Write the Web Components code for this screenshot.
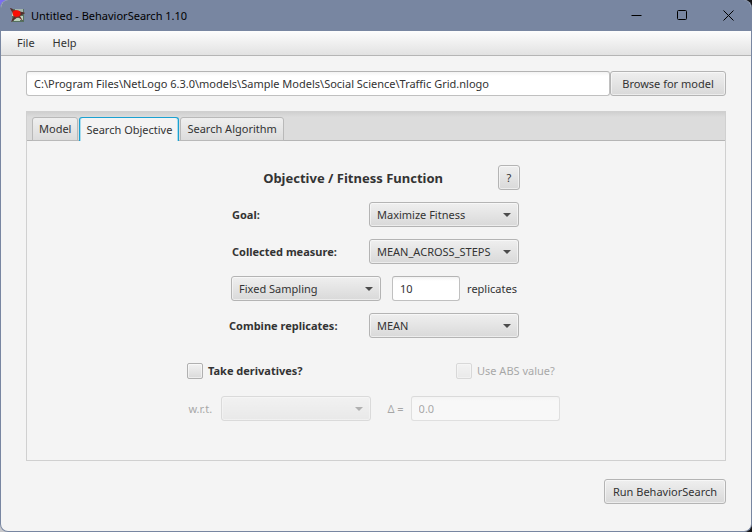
<!DOCTYPE html>
<html lang="en">
<head>
<meta charset="utf-8">
<title>Untitled - BehaviorSearch 1.10</title>
<style>
  html, body { margin: 0; min-height: 100vh; }
  body {
    display: flex;
    font: 11px/16px "Noto Sans", "Open Sans", sans-serif;
    color: #333;
    background:
      radial-gradient(circle at 0 0, #7a6ff0 12px, transparent 13px),
      radial-gradient(circle at 0 100%, #c9c9cc 12px, transparent 13px),
      #16161a;
  }
</style>
</head>
<body>
<app-window>
  <title-bar slot="title">Untitled - BehaviorSearch 1.10</title-bar>
  <menu-bar slot="menu" items="File|Help"></menu-bar>
  <path-row>
    <fx-field wide name="Model file" value="C:\Program Files\NetLogo 6.3.0\models\Sample Models\Social Science\Traffic Grid.nlogo"></fx-field>
    <fx-button style="--w:116px">Browse for model</fx-button>
  </path-row>
  <tab-pane tabs="Model|Search Objective|Search Algorithm" selected="1">
    <objective-form></objective-form>
  </tab-pane>
  <fx-button slot="footer" style="--w:122px">Run BehaviorSearch</fx-button>
</app-window>

<script>
const BASE = `
  *, *::before, *::after { box-sizing: border-box; }
  button, input, select { font: inherit; color: inherit; margin: 0; }
`;

class Base extends HTMLElement {
  connectedCallback() {
    if (this.shadowRoot) return;
    this.attachShadow({ mode: "open" }).innerHTML = `<style>${BASE}${this.css()}</style>${this.html()}`;
  }
  attr(n, d = "") { return this.getAttribute(n) ?? d; }
  list(n) { return this.attr(n).split("|"); }
}

customElements.define("app-window", class extends Base {
  css() { return `
    :host { flex: 1; min-width: 0; display: flex; flex-direction: column; min-height: 100vh; box-sizing: border-box;
      border: 1px solid #7886a1; border-top: 0; border-radius: 8px; overflow: hidden; background: #f4f4f4; }
    main { flex: 1; display: flex; flex-direction: column; padding: 15px 25px 18px; gap: 15px; }
    footer { display: flex; justify-content: flex-end; padding: 0 25px 27px; }
  `; }
  html() { return `<slot name="title"></slot><slot name="menu"></slot><main><slot></slot></main><footer><slot name="footer"></slot></footer>`; }
});

customElements.define("title-bar", class extends Base {
  css() { return `
    :host { display: flex; align-items: center; height: 31px; background: #7886a1; color: #000; padding-left: 9px; }
    .t { flex: 1; padding-left: 6px; }
    .logo { width: 15px; height: 15px; }
    button { width: 46px; height: 31px; border: 0; padding: 0; background: none; display: grid; place-items: center; }
    button svg { width: 11px; height: 11px; fill: none; stroke: #000; }
  `; }
  html() { return `
    <svg class="logo" viewBox="0 0 15 15" aria-hidden="true">
      <rect x="2" y="1" width="12" height="13" fill="#55705f"/>
      <rect x="5" y="1" width="8" height="3" fill="#a3b5ad"/>
      <path d="M2 4h3v4H2zM9 8h4v4H9zM4 10h6v3H4z" fill="#bcd3bd"/>
      <path d="M0 0L4 2L9 3L15 5L10 8L13 13L8 9L1 14L4 8Z" fill="#7a302b"/>
      <path d="M0 0L3 1L2 3ZM1 14L4 9L6 10ZM15 5L11 4L11 7Z" fill="#4a3030"/>
      <ellipse cx="6.500" cy="5.500" rx="3.800" ry="3.300" fill="#fa0d05"/>
    </svg>
    <span class="t"><slot></slot></span>
    <button aria-label="Minimize"><svg viewBox="0 0 11 11"><path d="M.5 5.5h10"/></svg></button>
    <button aria-label="Maximize"><svg viewBox="0 0 11 11"><rect x=".5" y=".5" width="9" height="9" rx="1"/></svg></button>
    <button aria-label="Close"><svg viewBox="0 0 11 11"><path d="M.5.5l10 10M10.5.5l-10 10"/></svg></button>`; }
});

customElements.define("menu-bar", class extends Base {
  css() { return `
    :host { display: flex; height: 25px; box-sizing: border-box; padding-left: 8px; border-bottom: 1px solid #b5b5b5;
      background: linear-gradient(#fdfdfd, #e2e2e2); }
    button { border: 0; background: none; padding: 0 8px; margin-right: 2px; }
  `; }
  html() { return this.list("items").map(i => `<button>${i}</button>`).join(""); }
});

customElements.define("path-row", class extends Base {
  css() { return `:host { display: flex; }`; }
  html() { return `<slot></slot>`; }
});

customElements.define("fx-button", class extends Base {
  css() { return `
    :host { display: block; flex: none; }
    button { display: block; width: var(--w, auto); height: 25px; padding: 0; border: 1px solid #b4b4b4; border-radius: 3px;
      background: linear-gradient(#efefef, #d9d9d9); box-shadow: inset 0 0 0 1px #ffffff80; white-space: nowrap; }
  `; }
  html() { return `<button type="button"><slot></slot></button>`; }
});

customElements.define("fx-field", class extends Base {
  css() { return `
    :host { display: flex; align-items: center; gap: 7px; }
    :host([wide]) { flex: 1; min-width: 0; }
    input { width: var(--w, 100%); height: 25px; padding: 0 7px; border: 1px solid #c0c0c0; border-top-color: #b4b4b4; border-radius: 3px;
      background: linear-gradient(#f3f3f3, #fff 4px); outline: 0; }
    :host([disabled]) { opacity: .4; }
  `; }
  html() {
    const b = this.attr("before"), a = this.attr("after");
    return `${b ? `<label for="f">${b}</label>` : ""}<input id="f" type="text" value="${this.attr("value")}"
      ${b || a ? "" : `aria-label="${this.attr("name")}"`} ${this.hasAttribute("disabled") ? "disabled" : ""}>${a ? `<label for="f">${a}</label>` : ""}`;
  }
});

customElements.define("fx-choice", class extends Base {
  css() { return `
    :host { display: flex; align-items: center; }
    label { width: var(--label); font-weight: 700; white-space: nowrap; }
    :host([indent]) label { padding-left: 3px; }
    .box { position: relative; width: 150px; }
    select { appearance: none; display: block; width: 100%; height: 25px; padding: 0 16px 0 7px; border: 1px solid #b4b4b4; border-radius: 3px;
      background: linear-gradient(#efefef, #d9d9d9); box-shadow: inset 0 0 0 1px #ffffff80; outline: 0; opacity: 1; text-overflow: clip; }
    svg { position: absolute; right: 8px; top: 11px; width: 8px; height: 4px; fill: #4c4c4c; pointer-events: none; }
    :host([disabled]) { opacity: .4; }
    :host([disabled]) label { font-weight: 400; }
  `; }
  html() {
    const l = this.attr("label");
    return `${l ? `<label for="s">${l}</label>` : ""}<span class="box"><select id="s" ${l ? "" : `aria-label="${this.attr("name")}"`}
      ${this.hasAttribute("disabled") ? "disabled" : ""}><option>${this.attr("value")}</option></select>
      <svg viewBox="0 0 8 4" aria-hidden="true"><path d="M0 0h8L4 4z"/></svg></span>`;
  }
});

customElements.define("fx-check", class extends Base {
  css() { return `
    :host { display: flex; }
    label { display: flex; align-items: center; gap: 5px; white-space: nowrap; }
    input { appearance: none; width: 16px; height: 16px; border: 1px solid #b0b0b0; border-radius: 2px;
      background: linear-gradient(#f2f2f2, #dadada); box-shadow: inset 0 0 0 1px #ffffff80; }
    :host([disabled]) { opacity: .4; }
  `; }
  html() { return `<label><input type="checkbox" ${this.hasAttribute("disabled") ? "disabled" : ""}><slot></slot></label>`; }
});

customElements.define("tab-pane", class extends Base {
  css() { return `
    :host { flex: 1; display: flex; flex-direction: column; border: 1px solid #d0d0d0; }
    .head { display: flex; align-items: flex-end; gap: 1px; height: 29px; padding-left: 5px;
      background: linear-gradient(#cfcfcf, #dcdcdc 5px); box-shadow: inset 0 -1px #b5b5b5; }
    button { height: 24px; padding: 0 6px; border: 1px solid #b9b9b9; border-radius: 3px 3px 0 0; white-space: nowrap;
      background: linear-gradient(#efefef, #dcdcdc); }
    button[aria-selected=true] { border-color: #1ba1d1; border-bottom: 0; background: #f4f4f4; box-shadow: inset 1px 0 #a8dcee, inset -1px 0 #a8dcee; }
    .body { flex: 1; }
  `; }
  html() {
    return `<div class="head" role="tablist">${this.list("tabs").map((t, i) =>
      `<button role="tab" aria-selected="${i == this.attr("selected")}">${t}</button>`).join("")}</div><div class="body" role="tabpanel"><slot></slot></div>`;
  }
});

customElements.define("objective-form", class extends Base {
  css() { return `
    :host { display: flex; flex-direction: column; align-items: center; gap: 12px; padding: 24px 4px 0 0; }
    .row { display: flex; align-items: center; }
    .head { width: 292px; justify-content: flex-end; gap: 55px; }
    h1 { margin: 0; font-size: 13px; line-height: 18px; font-weight: 700; white-space: nowrap; }
    .deriv { width: 374px; justify-content: space-between; padding-top: 13px; margin-bottom: 5px; }
    .bold { font-weight: 700; }
    .abs { width: 105px; }
  `; }
  html() { return `
    <div class="row head"><h1>Objective / Fitness Function</h1><fx-button style="--w:22px">?</fx-button></div>
    <fx-choice indent label="Goal:" value="Maximize Fitness" style="--label:140px"></fx-choice>
    <fx-choice indent label="Collected measure:" value="MEAN_ACROSS_STEPS" style="--label:140px"></fx-choice>
    <div class="row" style="gap:11px">
      <fx-choice name="Sampling" value="Fixed Sampling"></fx-choice>
      <fx-field after="replicates" value="10" style="--w:68px"></fx-field>
    </div>
    <fx-choice label="Combine replicates:" value="MEAN" style="--label:140px"></fx-choice>
    <div class="row deriv"><fx-check class="bold">Take derivatives?</fx-check><fx-check class="abs" disabled>Use ABS value?</fx-check></div>
    <div class="row" style="gap:16px">
      <fx-choice disabled label="w.r.t." value="" style="--label:33px"></fx-choice>
      <fx-field disabled before="Δ =" value="0.0" style="--w:149px"></fx-field>
    </div>`; }
});
</script>
</body>
</html>
